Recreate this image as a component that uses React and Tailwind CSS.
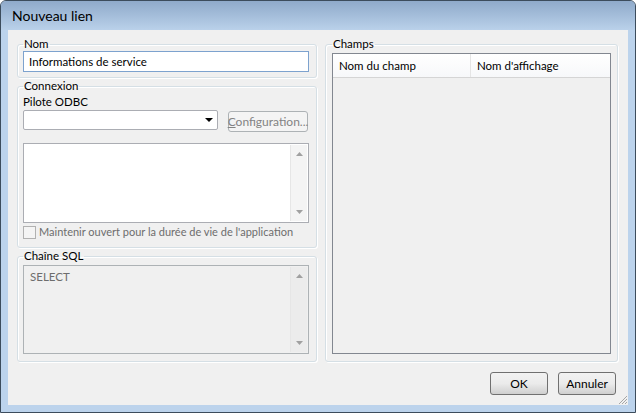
import React from "react";

const font = { fontFamily: 'Lato, "Liberation Sans", Arial, sans-serif' };

function UpArrow() {
  return (
    <svg width="7" height="4" viewBox="0 0 7 4" className="block">
      <path d="M3.5 0 L7 4 L0 4 Z" fill="#a0a0a0" />
    </svg>
  );
}
function DownArrow() {
  return (
    <svg width="7" height="4" viewBox="0 0 7 4" className="block">
      <path d="M0 0 L7 0 L3.5 4 Z" fill="#a0a0a0" />
    </svg>
  );
}

function Scrollbar({ bg = "bg-[#f4f4f4]" }) {
  return (
    <div className={`w-[17px] h-full flex flex-col items-center justify-between py-[7px] ${bg} border-l border-[#e6e6e6]`}>
      <UpArrow />
      <DownArrow />
    </div>
  );
}

function Group({ label, className = "", children }) {
  return (
    <fieldset className={`border border-[#d5dfe5] rounded-[3px] shadow-[inset_1px_1px_0_#ffffff,1px_1px_0_#ffffff] px-[5px] ${className}`}>
      <legend className="px-[1px] text-[11.5px] leading-[14px] text-black">{label}</legend>
      {children}
    </fieldset>
  );
}

export default function App() {
  return (
    <div
      className="w-[636px] h-[413px] flex flex-col bg-[#bcd3ec] border border-[#3c4c5c] rounded-t-[6px] overflow-hidden relative text-[11.5px] text-black"
      style={font}
    >
      {/* Title bar */}
      <div className="h-[29px] shrink-0 flex items-center pl-[11px] bg-gradient-to-b from-[#8faaca] to-[#bad1ea]">
        <span className="text-[14px] text-black">Nouveau lien</span>
      </div>

      {/* Client area */}
      <div className="flex-1 mx-[7px] mb-[7px] bg-[#f0f0f0] flex flex-col px-[9px] pt-[7px] pb-[10px] relative">
        <div className="flex gap-[8px]">
          {/* Left column */}
          <div className="w-[300px] flex flex-col">
            <Group label="Nom" className="pb-[5px]">
              <input
                readOnly
                value="Informations de service"
                className="w-[286px] h-[21px] border border-[#7da2ce] bg-white px-[5px] text-[11.5px] outline-none"
                style={font}
              />
            </Group>

            <Group label="Connexion" className="mt-[1px] pb-[8px]">
              <div className="leading-[15px] mt-[1px]">Pilote ODBC</div>
              <div className="flex items-start mt-[1px]">
                <div className="w-[195px] h-[20px] border border-[#abadb3] bg-white rounded-[2px] flex items-center justify-end pr-[4px]">
                  <svg width="8" height="4" viewBox="0 0 8 4"><path d="M0 0 L8 0 L4 4 Z" fill="#000" /></svg>
                </div>
                <div className="ml-[10px] mt-[1px] w-[80px] h-[21px] border border-[#adb2b5] rounded-[3px] bg-[#f4f4f4] flex items-center justify-center text-[#838383] text-[12px]">
                  <span><span className="underline">C</span>onfiguration...</span>
                </div>
              </div>
              <div className="mt-[11px] w-[286px] h-[80px] border border-[#abadb3] bg-white flex justify-end p-[1px]">
                <Scrollbar />
              </div>
              <div className="flex items-center mt-[2px] h-[14px] whitespace-nowrap">
                <div className="w-[13px] h-[13px] shrink-0 border border-[#b1b1b1] bg-[#f4f4f4]" />
                <span className="ml-[3px] text-[#6d6d6d] text-[11px]">Maintenir ouvert pour la durée de vie de l'application</span>
              </div>
            </Group>

            <Group label="Chaîne SQL" className="mt-[1px] pb-[7px]">
              <div className="mt-[2px] w-[286px] h-[89px] border border-[#adb2b5] bg-[#f0f0f0] flex p-[1px]">
                <div className="flex-1 pl-[5px] pt-[3px] text-[#6d6d6d] leading-[14px]">SELECT</div>
                <Scrollbar bg="bg-[#ececec]" />
              </div>
            </Group>
          </div>

          {/* Right column */}
          <div className="w-[293px] flex flex-col">
            <Group label="Champs" className="flex-1 flex flex-col pb-[7px] pl-[6px] pr-[5px]">
              <div className="mt-[2px] flex-1 w-[279px] border border-[#828790] bg-[#f0f0f0] flex flex-col">
                <div className="h-[24px] flex bg-gradient-to-b from-white to-[#f7f8fa] border-b border-[#d5d5d5]">
                  <div className="w-[138px] border-r border-[#e5e5e5] flex items-center pl-[6px]">Nom du champ</div>
                  <div className="flex-1 flex items-center pl-[6px]">Nom d'affichage</div>
                </div>
              </div>
            </Group>
          </div>
        </div>

        {/* Buttons */}
        <div className="mt-[10px] flex justify-end gap-[10px] pr-[3px]">
          <button className="w-[58px] h-[23px] border border-[#707070] rounded-[3px] bg-gradient-to-b from-[#f2f2f2] via-[#ebebeb] to-[#cfcfcf] text-[12px]" style={font}>OK</button>
          <button className="w-[58px] h-[23px] border border-[#707070] rounded-[3px] bg-gradient-to-b from-[#f2f2f2] via-[#ebebeb] to-[#cfcfcf] text-[12px]" style={font}>Annuler</button>
        </div>

        {/* Resize grip */}
        <svg width="11" height="11" viewBox="0 0 11 11" className="absolute right-0 bottom-0">
          <path d="M10 2 L2 10 M10 5 L5 10 M10 8 L8 10" stroke="#a6a6a6" strokeWidth="1" />
        </svg>
      </div>
    </div>
  );
}
